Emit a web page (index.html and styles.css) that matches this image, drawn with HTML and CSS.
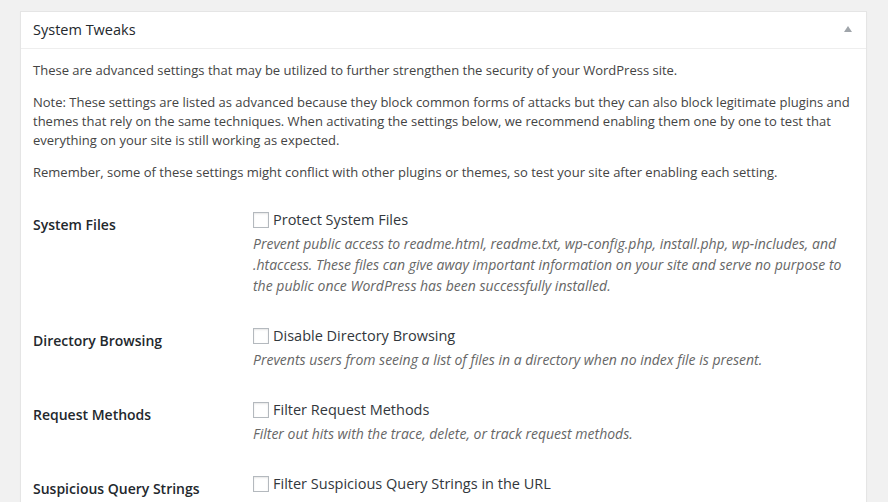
FILE: index.html
```html
<!DOCTYPE html>
<html>
<head>
<meta charset="utf-8">
<link rel="stylesheet" href="styles.css">
</head>
<body>
<div class="wrap">
  <div class="postbox">
    <div class="postbox-header">
      <h2 class="hndle">System Tweaks</h2>
      <span class="toggle-arrow"></span>
    </div>
    <div class="inside">
      <p>These are advanced settings that may be utilized to further strengthen the security of your WordPress site.</p>
      <p>Note: These settings are listed as advanced because they block common forms of attacks but they can also block legitimate plugins and themes that rely on the same techniques. When activating the settings below, we recommend enabling them one by one to test that everything on your site is still working as expected.</p>
      <p>Remember, some of these settings might conflict with other plugins or themes, so test your site after enabling each setting.</p>
      <table class="form-table">
        <tr>
          <th>System Files</th>
          <td>
            <label class="check"><span class="box"></span>Protect System Files</label>
            <p class="description">Prevent public access to readme.html, readme.txt, wp-config.php, install.php, wp-includes, and .htaccess. These files can give away important information on your site and serve no purpose to the public once WordPress has been successfully installed.</p>
          </td>
        </tr>
        <tr>
          <th>Directory Browsing</th>
          <td>
            <label class="check"><span class="box"></span>Disable Directory Browsing</label>
            <p class="description">Prevents users from seeing a list of files in a directory when no index file is present.</p>
          </td>
        </tr>
        <tr>
          <th>Request Methods</th>
          <td>
            <label class="check"><span class="box"></span>Filter Request Methods</label>
            <p class="description">Filter out hits with the trace, delete, or track request methods.</p>
          </td>
        </tr>
        <tr>
          <th>Suspicious Query Strings</th>
          <td>
            <label class="check"><span class="box"></span>Filter Suspicious Query Strings in the URL</label>
            <p class="description">These are very common in attacks and should be blocked to protect your site.</p>
          </td>
        </tr>
      </table>
    </div>
  </div>
</div>
</body>
</html>
```

FILE: styles.css
```css
html, body {
  margin: 0;
  padding: 0;
  background: #f1f1f1;
  font-family: "Open Sans", "Liberation Sans", sans-serif;
  color: #444;
  font-size: 13px;
}
.wrap {
  padding: 11px 21px 0 20px;
}
.postbox {
  background: #fff;
  border: 1px solid #e5e5e5;
  box-shadow: 0 1px 1px rgba(0,0,0,.04);
}
.postbox-header {
  display: flex;
  align-items: center;
  justify-content: space-between;
  border-bottom: 1px solid #eee;
}
.hndle {
  margin: 0;
  padding: 8px 12px;
  font-size: 14.5px;
  line-height: 19.6px;
  font-weight: 400;
  color: #23282d;
}
.toggle-arrow {
  width: 0;
  height: 0;
  border-left: 4px solid transparent;
  border-right: 4px solid transparent;
  border-bottom: 6px solid #a0a5aa;
  margin-right: 14px;
  margin-top: -2px;
}
.inside {
  padding: 0 12px 12px;
}
.inside > p {
  margin: 12px 0 13px;
  line-height: 19px;
}
.inside > p + p {
  margin-top: 13px;
}
.form-table {
  width: 100%;
  border-collapse: collapse;
  margin-top: 13px;
}
.form-table th {
  width: 200px;
  text-align: left;
  vertical-align: top;
  padding: 20px 10px 20px 0;
  font-size: 14px;
  font-weight: 600;
  line-height: 20px;
  color: #23282d;
}
.form-table td {
  vertical-align: top;
  padding: 15px 10px;
  font-size: 14.5px;
  line-height: 20px;
}
.check {
  display: flex;
  align-items: center;
  color: #32373c;
}
.box {
  width: 14px;
  height: 14px;
  border: 1px solid #b4b9be;
  box-shadow: inset 0 1px 2px rgba(0,0,0,.1);
  background: #fff;
  margin-right: 4px;
  flex: none;
}
.description {
  margin: 3px 0 0;
  font-size: 14px;
  font-style: italic;
  line-height: 21px;
  color: #666;
}
```
